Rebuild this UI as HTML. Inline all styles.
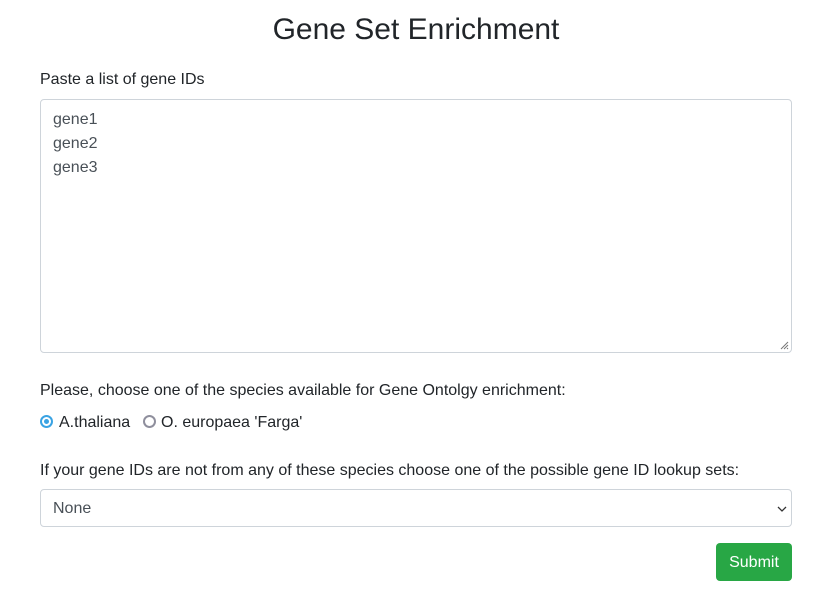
<!DOCTYPE html>
<html><head><style>
body{margin:0;background:#fff;font-family:"Liberation Sans",sans-serif;color:#212529;font-size:16px;}
h1{position:absolute;top:12px;left:0;width:832px;text-align:center;font-size:30px;font-weight:400;margin:0;line-height:36px;}
.abs{position:absolute;}
.ta{left:40px;top:99px;border:1px solid #ced4da;border-radius:4px;box-sizing:border-box;width:752px;height:254px;}
.ta div{position:absolute;left:12px;top:8px;line-height:24px;color:#495057;}
.sel{left:40px;top:489px;width:752px;height:38px;border:1px solid #ced4da;border-radius:4px;box-sizing:border-box;}
.btn{left:716px;top:543px;width:76px;height:38px;background:#28a745;border-radius:4px;color:#fff;text-align:center;line-height:40px;}
</style></head><body>
<h1>Gene Set Enrichment</h1>
<div class="abs" style="left:40px;top:71px;">Paste a list of gene IDs</div>
<div class="abs ta"><div>gene1<br>gene2<br>gene3</div>
<svg style="position:absolute;right:2px;bottom:2px" width="9" height="9"><path d="M8 1L1 8M8 4L4 8M8 7L7 8" stroke="#777" stroke-width="1"/></svg></div>
<div class="abs" style="left:40px;top:382px;">Please, choose one of the species available for Gene Ontolgy enrichment:</div>
<div class="abs" style="left:40px;top:414px;font-size:16px;">
<span style="position:absolute;left:0;top:1px;width:13px;height:13px;border-radius:50%;border:2px solid #3aa3e3;box-sizing:border-box;"><span style="position:absolute;left:2px;top:2px;width:5px;height:5px;border-radius:50%;background:#3aa3e3"></span></span>
<span style="position:absolute;left:19px;top:0;white-space:nowrap">A.thaliana</span>
<span style="position:absolute;left:103px;top:1px;width:13px;height:13px;border-radius:50%;border:2px solid #8f8f9d;box-sizing:border-box;"></span>
<span style="position:absolute;left:121px;top:0;white-space:nowrap">O. europaea 'Farga'</span>
</div>
<div class="abs" style="left:40px;top:462px;">If your gene IDs are not from any of these species choose one of the possible gene ID lookup sets:</div>
<div class="abs sel"><span style="position:absolute;left:12px;top:10px;color:#495057">None</span>
<svg style="position:absolute;right:4px;top:15px" width="10" height="8"><path d="M1 2L5 6L9 2" stroke="#333" stroke-width="1.3" fill="none"/></svg></div>
<div class="abs btn">Submit</div>
</body></html>
